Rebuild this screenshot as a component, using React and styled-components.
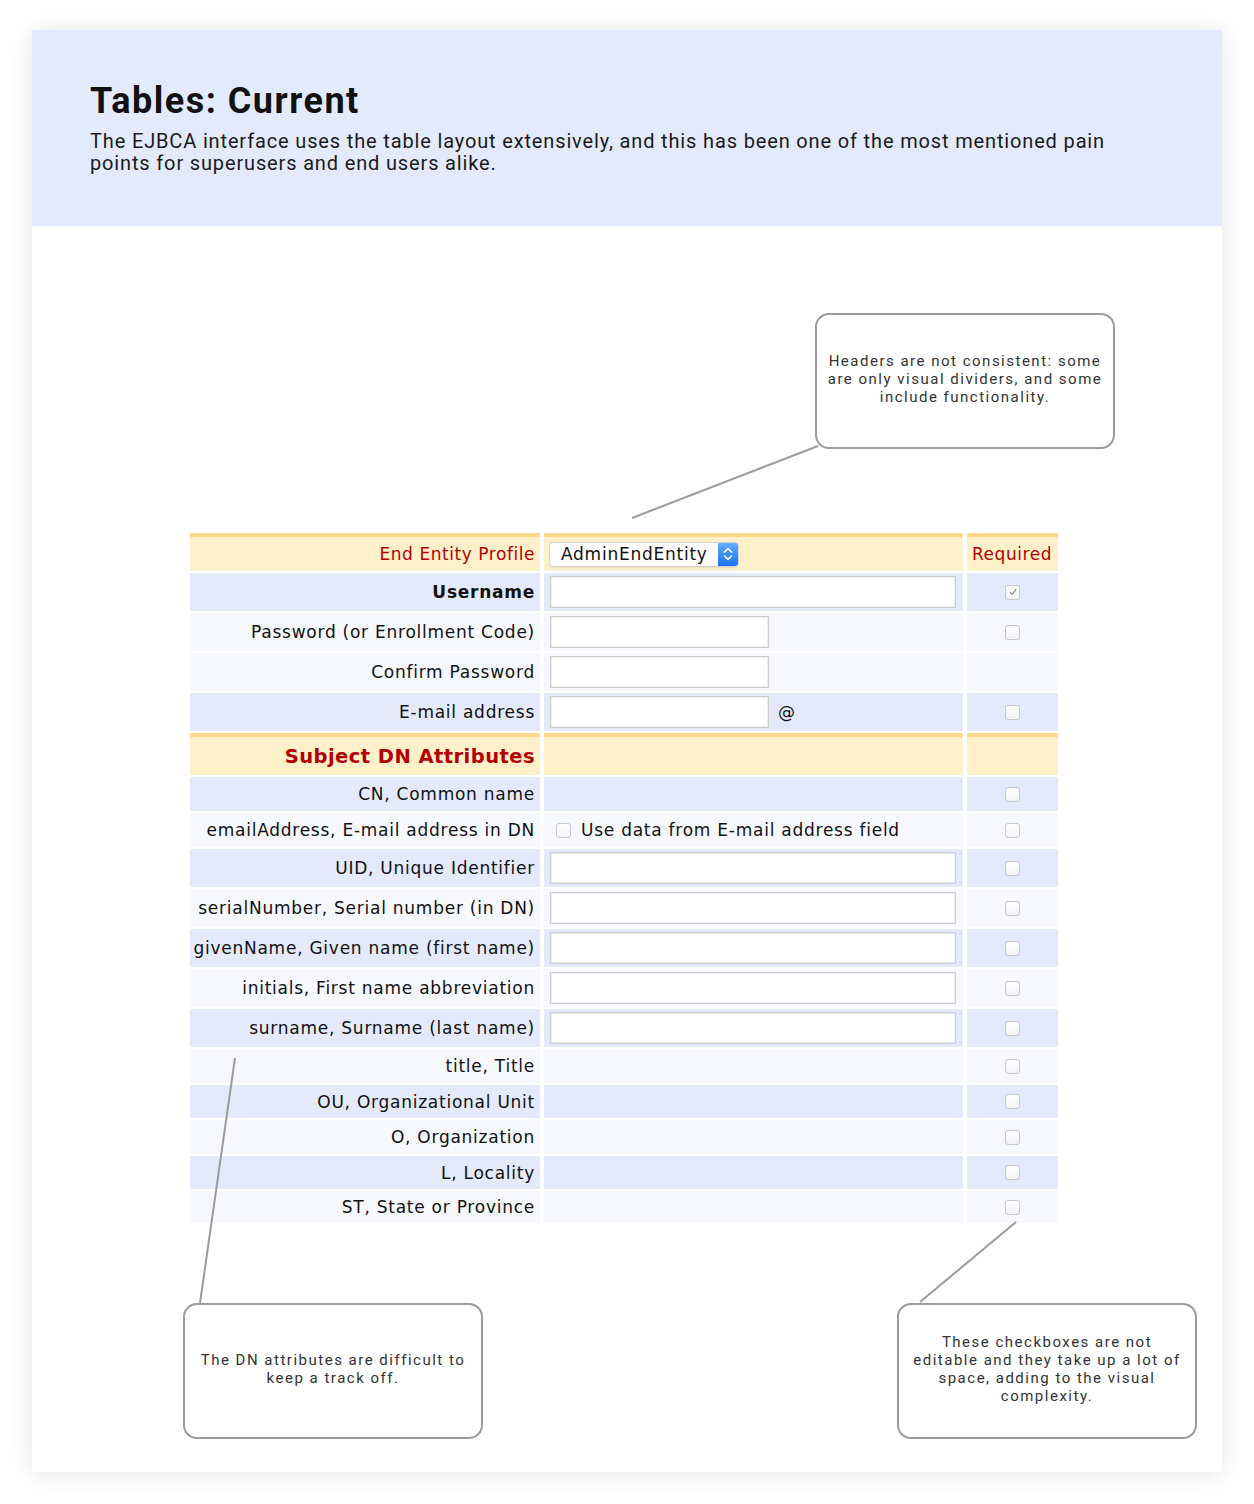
import React from 'react';
import styled, { createGlobalStyle } from 'styled-components';

const Global = createGlobalStyle`
  html, body { margin: 0; padding: 0; background: #ffffff; }
  body { font-family: Roboto, "Noto Sans", sans-serif; }
  * { box-sizing: border-box; }
`;

const Page = styled.div`
  padding: 30px 32px 32px;
`;

const Card = styled.div`
  width: 1190px;
  background: #ffffff;
  box-shadow: 0 2px 22px rgba(0, 0, 0, 0.11);
`;

const HeaderBand = styled.header`
  height: 196px;
  background: #e4eafd;
  padding: 50px 58px 0;
`;

const Title = styled.h1`
  margin: 0;
  font: 700 36px/43px Roboto, sans-serif;
  letter-spacing: 1.5px;
  color: #111111;
`;

const Lead = styled.p`
  margin: 7px 0 0;
  max-width: 1060px;
  font: 400 20px/22px Roboto, sans-serif;
  letter-spacing: 0.85px;
  color: #1a1a1a;
`;

const Canvas = styled.section`
  position: relative;
  height: 1246px;
  padding: 307px 0 0 158px;
`;

const Table = styled.div`
  display: grid;
  grid-template-columns: 350px 419px 91px;
  gap: 2px 4px;
  width: 868px;
`;

const tones = {
  head: '#fef0c9',
  blue: '#e4eafc',
  pale: '#f7f8fe',
};

const Cell = styled.div`
  display: flex;
  align-items: center;
  height: ${(p) => p.$h + (p.$tone === 'head' ? 4 : 0)}px;
  background: ${(p) => tones[p.$tone]};
  border-top: ${(p) => (p.$tone === 'head' ? '4px solid #fdd98b' : 'none')};
  font-family: "DejaVu Sans", Verdana, sans-serif;
  font-size: 17px;
  letter-spacing: 0.75px;
  color: #111111;
`;

const LabelCell = styled(Cell)`
  justify-content: flex-end;
  padding-right: 5px;
  font-weight: ${(p) => (p.$bold ? 700 : 400)};
`;

const FieldCell = styled(Cell)`
  padding-left: 6px;
`;

const ReqCell = styled(Cell)`
  justify-content: center;
`;

const HeadText = styled.span`
  color: #b20000;
  font-size: ${(p) => (p.$big ? '19.5px' : '17px')};
  font-weight: ${(p) => (p.$big ? 700 : 400)};
  letter-spacing: ${(p) => (p.$big ? '0.45px' : '0.55px')};
`;

const RequiredText = styled(HeadText)`
  margin-left: 5px;
  margin-right: auto;
`;

const TextInput = styled.input`
  width: ${(p) => p.$w}px;
  height: 32px;
  margin: 0;
  padding: 0 6px;
  border: 1px solid #cdcdcd;
  box-shadow: inset 0 0 0 1px #eeeeee;
  background: #ffffff;
  border-radius: 0;
  outline: none;
`;

const At = styled.span`
  margin-left: 9px;
  font-size: 17px;
`;

const Select = styled.div`
  display: flex;
  align-items: center;
  width: 190px;
  height: 25px;
  margin-left: -1px;
  background: #ffffff;
  border: 1px solid #d2d2d2;
  border-radius: 4px;
  overflow: hidden;
  box-shadow: 0 1px 1px rgba(0, 0, 0, 0.08);
`;

const SelectValue = styled.span`
  flex: 1;
  padding-left: 11px;
  font-family: "DejaVu Sans", Verdana, sans-serif;
  font-size: 17px;
  letter-spacing: 0.75px;
  color: #111111;
`;

const SelectButton = styled.span`
  display: flex;
  align-items: center;
  justify-content: center;
  width: 20px;
  height: 100%;
  background: linear-gradient(#62aefb, #1b72ef);
`;

const Box = styled.span`
  display: inline-flex;
  align-items: center;
  justify-content: center;
  width: 15px;
  height: 15px;
  border: 1px solid #c6c7ce;
  border-radius: 3px;
  background: linear-gradient(#ffffff, #f3f3f6);
`;

const InlineCheck = styled.label`
  display: flex;
  align-items: center;
  gap: 10px;
  margin-left: 6px;
`;

const Callout = styled.div`
  position: absolute;
  left: ${(p) => p.$x}px;
  top: ${(p) => p.$y}px;
  width: 300px;
  height: 136px;
  display: flex;
  align-items: center;
  justify-content: center;
  padding: 0 2px 5px;
  background: #ffffff;
  border: 2px solid #9b9b9b;
  border-radius: 14px;
  font: 400 15px/18px Roboto, sans-serif;
  letter-spacing: 1.5px;
  color: #333333;
  text-align: center;
  white-space: nowrap;
`;

const Connectors = styled.svg`
  position: absolute;
  left: 0;
  top: 0;
  pointer-events: none;
`;

function Checkbox({ checked }) {
  return (
    <Box>
      {checked && (
        <svg width="10" height="10" viewBox="0 0 10 10">
          <path d="M2 5.2 L4.2 7.4 L8.2 2.4" fill="none" stroke="#8a8a8a" strokeWidth="1.3" />
        </svg>
      )}
    </Box>
  );
}

function Field({ kind }) {
  if (kind === 'wide') return <TextInput $w={406} />;
  if (kind === 'short') return <TextInput type="password" $w={219} />;
  if (kind === 'email')
    return (
      <>
        <TextInput $w={219} />
        <At>@</At>
      </>
    );
  if (kind === 'usedata')
    return (
      <InlineCheck>
        <Checkbox />
        Use data from E-mail address field
      </InlineCheck>
    );
  return null;
}

const topRows = [
  { label: 'Username', bold: true, tone: 'blue', field: 'wide', req: 'checked', h: 38 },
  { label: 'Password (or Enrollment Code)', tone: 'pale', field: 'short', req: 'box', h: 38 },
  { label: 'Confirm Password', tone: 'pale', field: 'short', req: null, h: 38 },
  { label: 'E-mail address', tone: 'blue', field: 'email', req: 'box', h: 38 },
];

const dnRows = [
  { label: 'CN, Common name', tone: 'blue', field: null, req: 'box', h: 34 },
  { label: 'emailAddress, E-mail address in DN', tone: 'pale', field: 'usedata', req: 'box', h: 34 },
  { label: 'UID, Unique Identifier', tone: 'blue', field: 'wide', req: 'box', h: 38 },
  { label: 'serialNumber, Serial number (in DN)', tone: 'pale', field: 'wide', req: 'box', h: 38 },
  { label: 'givenName, Given name (first name)', tone: 'blue', field: 'wide', req: 'box', h: 38 },
  { label: 'initials, First name abbreviation', tone: 'pale', field: 'wide', req: 'box', h: 38 },
  { label: 'surname, Surname (last name)', tone: 'blue', field: 'wide', req: 'box', h: 38 },
  { label: 'title, Title', tone: 'pale', field: null, req: 'box', h: 34 },
  { label: 'OU, Organizational Unit', tone: 'blue', field: null, req: 'box', h: 33 },
  { label: 'O, Organization', tone: 'pale', field: null, req: 'box', h: 34 },
  { label: 'L, Locality', tone: 'blue', field: null, req: 'box', h: 33 },
  { label: 'ST, State or Province', tone: 'pale', field: null, req: 'box', h: 32 },
];

function Row({ row }) {
  return (
    <>
      <LabelCell $tone={row.tone} $h={row.h} $bold={row.bold}>
        {row.label}
      </LabelCell>
      <FieldCell $tone={row.tone} $h={row.h}>
        <Field kind={row.field} />
      </FieldCell>
      <ReqCell $tone={row.tone} $h={row.h}>
        {row.req && <Checkbox checked={row.req === 'checked'} />}
      </ReqCell>
    </>
  );
}

export default function App() {
  return (
    <>
      <Global />
      <Page>
        <Card>
          <HeaderBand>
            <Title>Tables: Current</Title>
            <Lead>
              The EJBCA interface uses the table layout extensively, and this has been one of the most
              mentioned pain points for superusers and end users alike.
            </Lead>
          </HeaderBand>
          <Canvas>
            <Table>
              <LabelCell $tone="head" $h={34}>
                <HeadText>End Entity Profile</HeadText>
              </LabelCell>
              <FieldCell $tone="head" $h={34}>
                <Select>
                  <SelectValue>AdminEndEntity</SelectValue>
                  <SelectButton>
                    <svg width="12" height="18" viewBox="0 0 12 18">
                      <path d="M2.5 7 L6 3.5 L9.5 7 M2.5 11 L6 14.5 L9.5 11" fill="none" stroke="#ffffff" strokeWidth="1.6" strokeLinecap="round" strokeLinejoin="round" />
                    </svg>
                  </SelectButton>
                </Select>
              </FieldCell>
              <ReqCell $tone="head" $h={34}>
                <RequiredText>Required</RequiredText>
              </ReqCell>

              {topRows.map((r) => (
                <Row key={r.label} row={r} />
              ))}

              <LabelCell $tone="head" $h={38}>
                <HeadText $big>Subject DN Attributes</HeadText>
              </LabelCell>
              <FieldCell $tone="head" $h={38} />
              <ReqCell $tone="head" $h={38} />

              {dnRows.map((r) => (
                <Row key={r.label} row={r} />
              ))}
            </Table>

            <Connectors width="1190" height="1246" viewBox="0 0 1190 1246">
              <g stroke="#9b9b9b" strokeWidth="2" fill="none">
                <line x1="600" y1="292" x2="786" y2="220" />
                <line x1="203" y1="832" x2="168" y2="1077" />
                <line x1="984" y1="996" x2="888" y2="1076" />
              </g>
            </Connectors>

            <Callout $x={783} $y={87}>
              <div>
                Headers are not consistent: some
                <br />
                are only visual dividers, and some
                <br />
                include functionality.
              </div>
            </Callout>
            <Callout $x={151} $y={1077}>
              <div>
                The DN attributes are difficult to
                <br />
                keep a track off.
              </div>
            </Callout>
            <Callout $x={865} $y={1077}>
              <div>
                These checkboxes are not
                <br />
                editable and they take up a lot of
                <br />
                space, adding to the visual
                <br />
                complexity.
              </div>
            </Callout>
          </Canvas>
        </Card>
      </Page>
    </>
  );
}
